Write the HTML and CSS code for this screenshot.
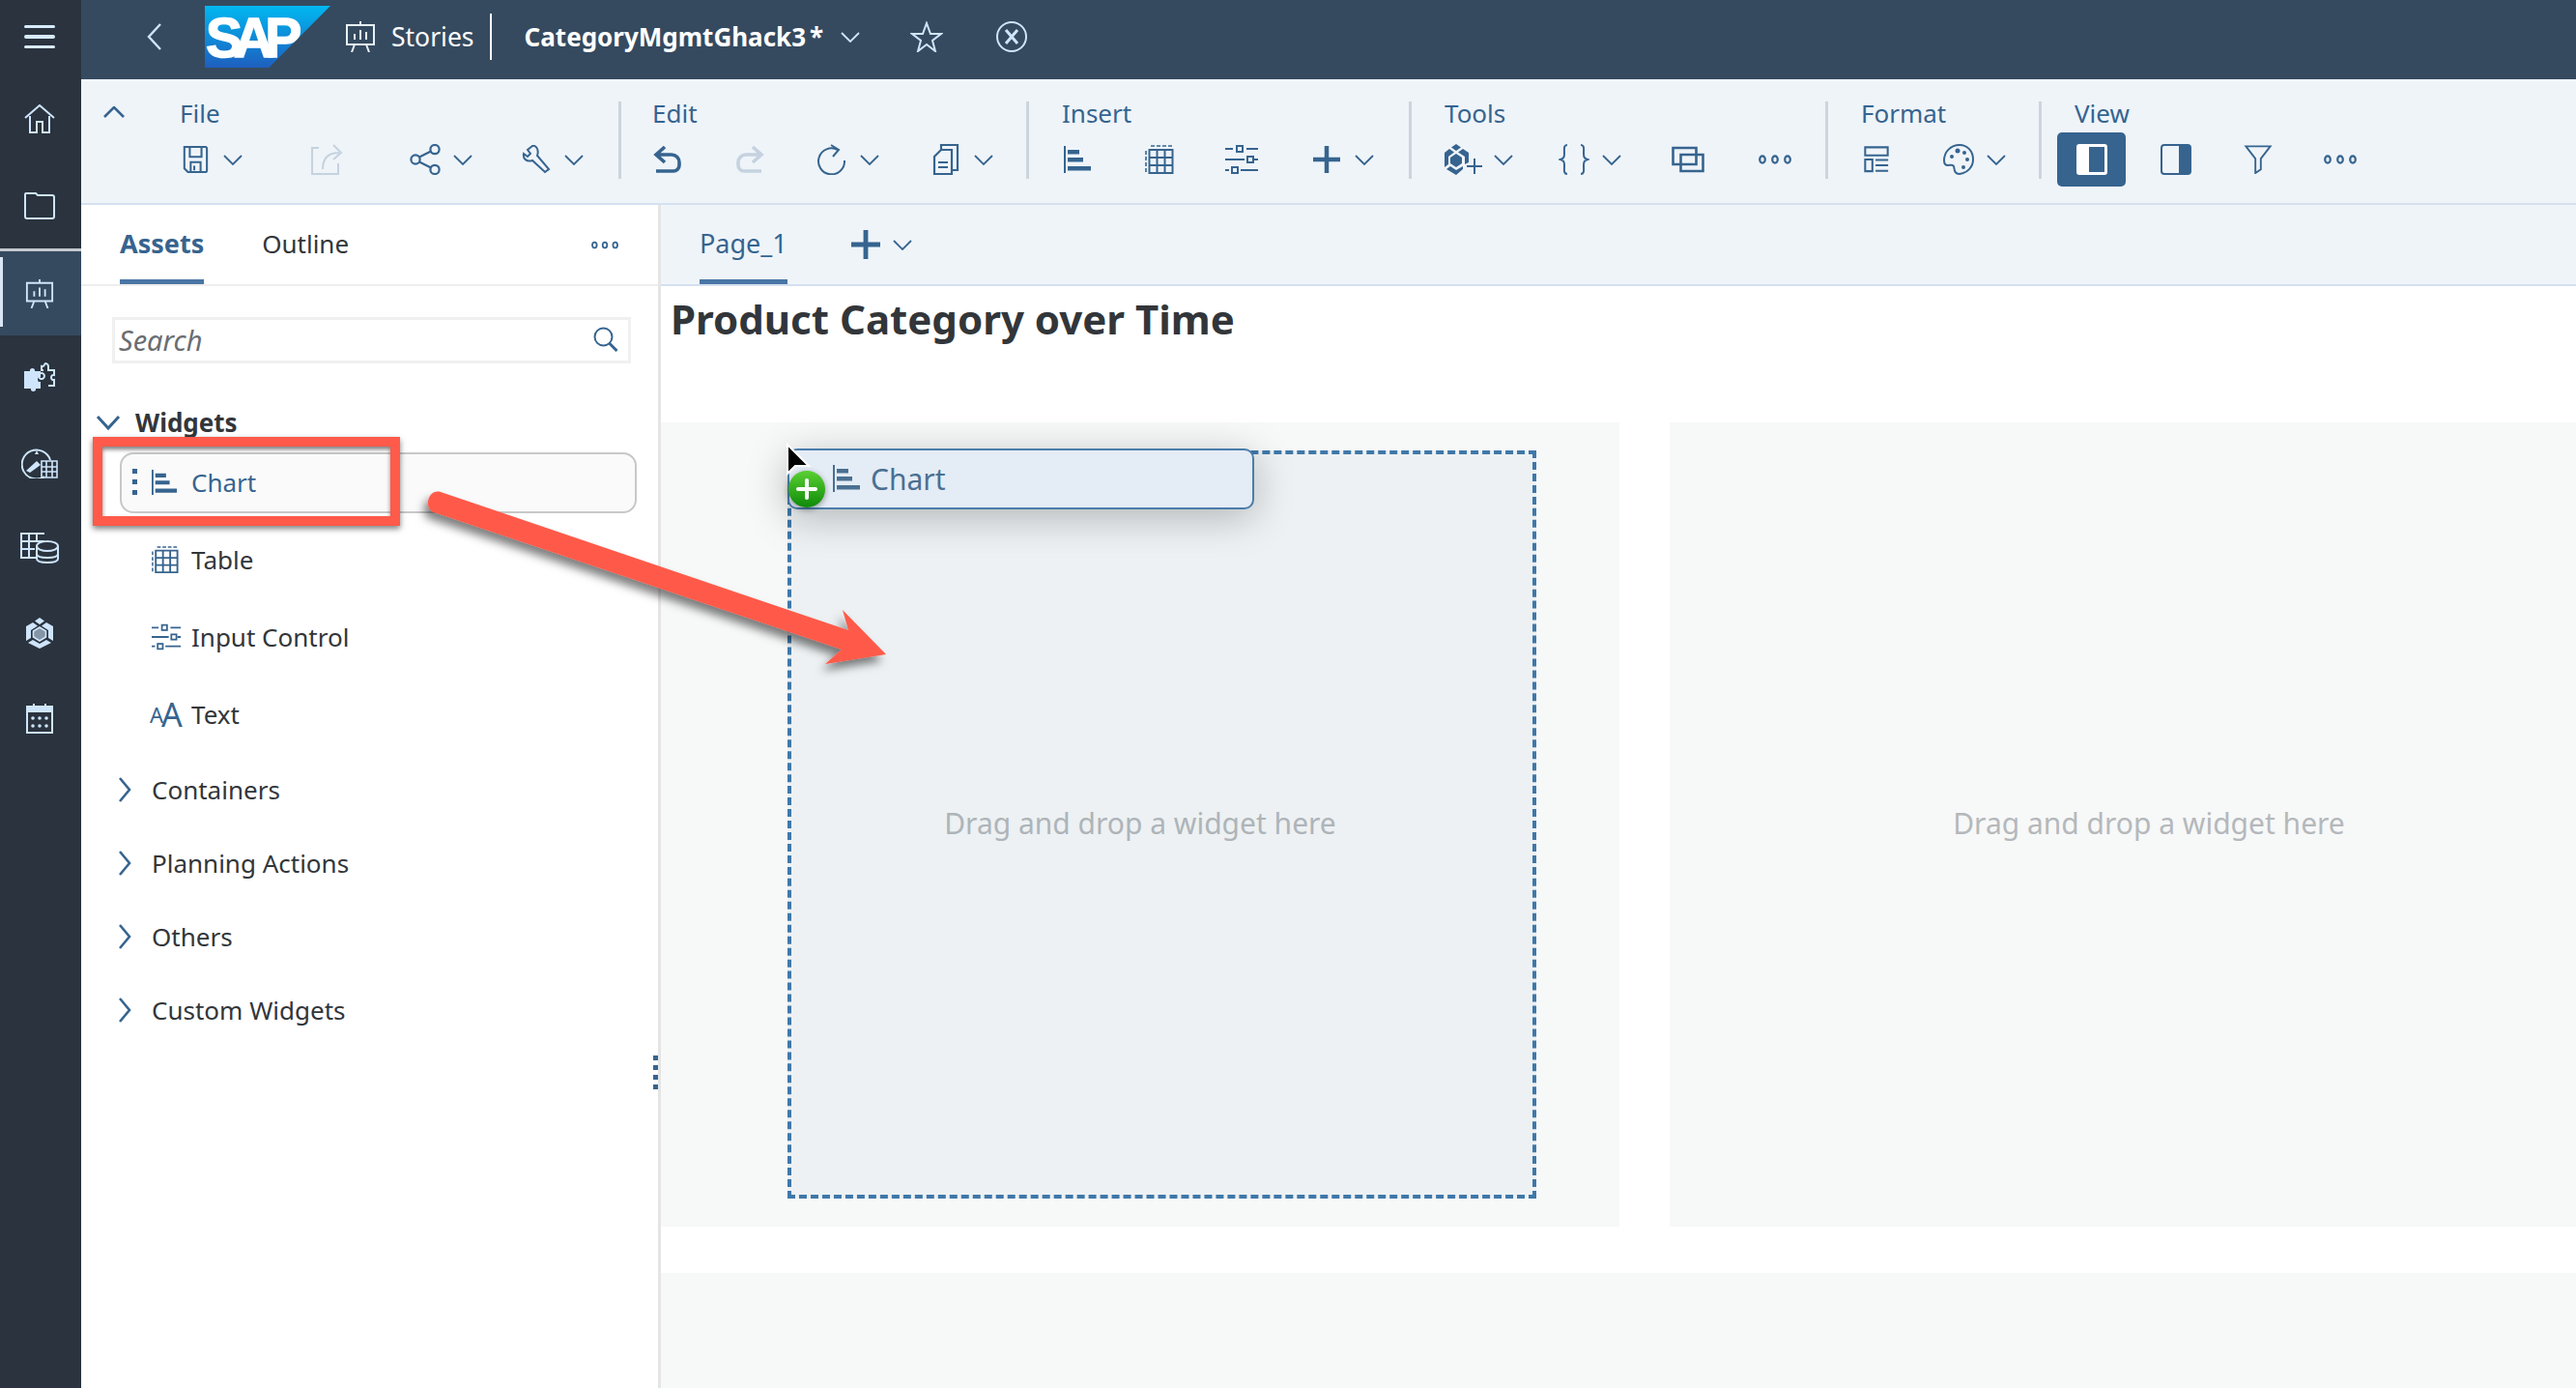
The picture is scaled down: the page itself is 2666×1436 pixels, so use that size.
FILE: index.html
```html
<!DOCTYPE html>
<html lang="en">
  <head>
    <meta charset="utf-8" />
    <meta name="viewport" content="width=device-width, initial-scale=1.0" />
    <title>CategoryMgmtGhack3 - Stories</title>
    <link rel="stylesheet" href="styles.css">
  </head>
  <body>
    <!-- Icon sprite -->
    <svg class="sprite" xmlns="http://www.w3.org/2000/svg">
      <symbol id="i-chev" viewBox="0 0 20 11"><path d="M1 1l9 9 9-9" fill="none" stroke="currentColor" stroke-width="1.8"/></symbol>
      <symbol id="i-save" viewBox="0 0 28 30"><path d="M2 1h23a2 2 0 0 1 2 2v24a2 2 0 0 1-2 2H6l-4-4z M8 1v11h13V1 M9 29V18h11v11 M13 22v5" fill="none" stroke="currentColor" stroke-width="2.2"/></symbol>
      <symbol id="i-export" viewBox="0 0 34 32"><path d="M9 4H2v27h27V20 M13 26c0-11 6-17 17-17 M24 1l8 8-8 7" fill="none" stroke="currentColor" stroke-width="2"/></symbol>
      <symbol id="i-share" viewBox="0 0 32 32"><g fill="none" stroke="currentColor" stroke-width="2.2"><circle cx="6" cy="16" r="4.6"/><circle cx="26" cy="5.6" r="4.6"/><circle cx="26" cy="26.4" r="4.6"/><path d="M10 13.6l12-6M10 18.4l12 6"/></g></symbol>
      <symbol id="i-wrench" viewBox="0 0 30 30"><path d="M11 2L6 6l3 4-3 3-4-3c-1 5 3 9 9 7l13 12 4-3-12-14c2-6-1-11-5-10z" transform="translate(0 -1)" fill="none" stroke="currentColor" stroke-width="2"/></symbol>
      <symbol id="i-undo" viewBox="0 0 30 30"><path d="M12 2L3 10l9 8 M3 10h16a8 8 0 0 1 8 8v3a6 6 0 0 1-6 6H3" fill="none" stroke="currentColor" stroke-width="3.6"/></symbol>
      <symbol id="i-redo" viewBox="0 0 30 30"><path d="M18 2l9 8-9 8 M27 10H11a8 8 0 0 0-8 8v3a6 6 0 0 0 6 6h18" fill="none" stroke="currentColor" stroke-width="3.6"/></symbol>
      <symbol id="i-refresh" viewBox="0 0 30 32"><path d="M21 6A13.5 13.5 0 1 0 28 17 M14 1l8 5-6 7" fill="none" stroke="currentColor" stroke-width="2"/></symbol>
      <symbol id="i-copy" viewBox="0 0 28 32"><path d="M9 6V1h17v26h-6 M9 6h11v25H2V13z M6 19h10 M6 24h10" fill="none" stroke="currentColor" stroke-width="2.2"/></symbol>
      <symbol id="i-chart" viewBox="0 0 28 28"><path d="M1 0v28" stroke="currentColor" stroke-width="2"/><path d="M4 4h12v4.500H4z M4 12h16v4.500H4z M4 21h24v4.500H4z" fill="currentColor"/></symbol>
      <symbol id="i-table" viewBox="0 0 30 30"><path d="M6 1h4M12 1h4M18 1h4M24 1h4M1 6v4M1 12v4M1 18v4M1 24v4" stroke="currentColor" stroke-width="1.600"/><path d="M4.500 5h24v24h-24z M4.500 13h24M4.500 21h24M12.500 5v24M20.500 5v24" fill="none" stroke="currentColor" stroke-width="2"/></symbol>
      <symbol id="i-input" viewBox="0 0 34 30"><g fill="none" stroke="currentColor" stroke-width="2"><path d="M0 4h8M22 4h12M0 15h20M30 15h4M0 26h4M16 26h18"/><rect x="12" y="1" width="6" height="6"/><rect x="23" y="12" width="6" height="6"/><rect x="7" y="23" width="6" height="6"/></g></symbol>
      <symbol id="i-plus" viewBox="0 0 28 28"><path d="M14 0v28M0 14h28" stroke="currentColor" stroke-width="4.500"/></symbol>
      <symbol id="i-cube" viewBox="0 0 30 32"><path d="M15 0l5 3.500-5 3.500-5-3.500z M8 5l5 3.500-7 4.500v8l-5 3V9z M22 5l7 4v15l-5-3v-8l-7-4.500z M3 26l5-3 7 4 7-4 5 3-12 6z" fill="currentColor"/><path d="M15 10l6.500 4v6L15 24l-6.500-4v-6z" fill="currentColor" fill-opacity=".55" stroke="currentColor" stroke-width="1.600"/></symbol>
      <symbol id="i-cube-add" viewBox="0 0 40 32"><path d="M13 0l5 3.500-5 3.500-5-3.500z M6 5l5 3.500-6 4.500v8l-4 3V9z M20 5l6 4v10l-4 2v-8l-7-4.500z M3 26l4-3 6 4 7-4v3l-7 6z" fill="currentColor"/><path d="M13 10l6 4v6l-6 4-6-4v-6z" fill="currentColor"/><path d="M32 15v16M24 23h16" stroke="currentColor" stroke-width="2"/></symbol>
      <symbol id="i-braces" viewBox="0 0 30 32"><path d="M8 1C4 1 5 5 5 10c0 4-1 5-4 6 3 1 4 2 4 6 0 5-1 9 3 9 M22 1c4 0 3 4 3 9 0 4 1 5 4 6-3 1-4 2-4 6 0 5 1 9-3 9" fill="none" stroke="currentColor" stroke-width="2"/></symbol>
      <symbol id="i-clone" viewBox="0 0 34 27"><path d="M1.500 1.500h24v17h-24z M9.500 8.500h23v17h-23z" fill="none" stroke="currentColor" stroke-width="2.600"/></symbol>
      <symbol id="i-dots" viewBox="0 0 34 10"><g fill="none" stroke="currentColor" stroke-width="2.200"><ellipse cx="4" cy="5" rx="2.800" ry="3.600"/><ellipse cx="17" cy="5" rx="2.800" ry="3.600"/><ellipse cx="30" cy="5" rx="2.800" ry="3.600"/></g></symbol>
      <symbol id="i-layout" viewBox="0 0 28 30"><path d="M1.500 1.500h25v9h-25z M1.500 15h8v13h-8z" fill="none" stroke="currentColor" stroke-width="2.200"/><path d="M13 15.500h14M13 21.500h14M13 27.500h14" stroke="currentColor" stroke-width="2.200"/></symbol>
      <symbol id="i-palette" viewBox="0 0 32 32"><path d="M17 1C8 1 1 8 1 17c0 3 1 5 4 5 3 0 5-1 6 1 1 3 0 8 6 8 8-1 14-7 14-15 0-9-6-15-14-15z" fill="none" stroke="currentColor" stroke-width="2"/><g fill="currentColor"><circle cx="9" cy="13" r="2"/><circle cx="15" cy="7" r="2.500"/><circle cx="22" cy="9" r="2"/><circle cx="25" cy="16" r="2"/><circle cx="21" cy="24" r="2"/></g></symbol>
      <symbol id="i-pane-left" viewBox="0 0 32 32"><rect width="32" height="32" rx="3" fill="#fff"/><rect x="13" y="3" width="16" height="26" fill="#36648f"/></symbol>
      <symbol id="i-pane-right" viewBox="0 0 32 32"><rect x="1" y="1" width="30" height="30" rx="3" fill="none" stroke="currentColor" stroke-width="2"/><path d="M19 1h9a3 3 0 0 1 3 3v24a3 3 0 0 1-3 3h-9z" fill="currentColor"/></symbol>
      <symbol id="i-filter" viewBox="0 0 30 32"><path d="M1.500 1.500h27L18 15v12l-6 4V15z" fill="none" stroke="currentColor" stroke-width="2"/></symbol>
      <symbol id="i-search" viewBox="0 0 26 26"><circle cx="10.500" cy="10.500" r="9" fill="none" stroke="currentColor" stroke-width="2"/><path d="M16.500 17l8 8" stroke="currentColor" stroke-width="3"/></symbol>
      <symbol id="i-stories" viewBox="0 0 30 32"><path d="M15 0v4M1 4h28v20H1z M9 24l-3 8M21 24l3 8M9 19v-6M15 19V9M21 19v-8" fill="none" stroke="currentColor" stroke-width="2"/></symbol>
      <symbol id="i-home" viewBox="0 0 32 30"><path d="M1 14L16 1l15 13 M6 12v17h7V18h6v11h7V12" fill="none" stroke="currentColor" stroke-width="2"/></symbol>
      <symbol id="i-folder" viewBox="0 0 32 28"><path d="M1 2a1 1 0 0 1 1-1h10l2 2h15a2 2 0 0 1 2 2v20a2 2 0 0 1-2 2H3a2 2 0 0 1-2-2z" fill="none" stroke="currentColor" stroke-width="2"/></symbol>
      <symbol id="i-puzzle" viewBox="0 0 32 32"><path d="M0 9h6c-1-4 6-4 5 0h6v6c-4-1-4 6 0 5v7h-5c1 4-6 4-5 0H0z" fill="currentColor"/><path d="M20 8h-2V4c3 1 3-3 4-3s3 1 3 3v4h6v5c-4-1-4 6 0 5v6h-6 M21 14a3 3 0 1 0 0 .1" fill="none" stroke="currentColor" stroke-width="2"/></symbol>
      <symbol id="i-gauge" viewBox="0 0 38 32"><path d="M24 30A15 15 0 1 1 30 13" fill="none" stroke="currentColor" stroke-width="2"/><path d="M5 24l11-10 4 4-11 8z M16 3l2 4h-4z" fill="currentColor"/><path d="M21 14h16v17H21z M26 14v17M32 14v17M21 20h16M21 25h16" fill="none" stroke="currentColor" stroke-width="1.600"/></symbol>
      <symbol id="i-data" viewBox="0 0 40 32"><path d="M25 1H1v25h15 M1 9h24M1 17h14M9 1v25M17 1v8" fill="none" stroke="currentColor" stroke-width="2"/><g fill="none" stroke="currentColor" stroke-width="2"><ellipse cx="28" cy="14" rx="11" ry="5"/><path d="M17 14v13c0 3 5 4 11 4s11-1 11-4V14M17 22c0 3 5 4 11 4s11-1 11-4"/></g></symbol>
      <symbol id="i-calendar" viewBox="0 0 28 32"><path d="M1 4h26v27H1z" fill="none" stroke="currentColor" stroke-width="2"/><path d="M1 4h26v6H1z M7 1h2v4H7z M19 1h2v4h-2z" fill="currentColor"/><g fill="currentColor"><circle cx="7" cy="16" r="1.800"/><circle cx="14" cy="16" r="1.800"/><circle cx="21" cy="16" r="1.800"/><circle cx="7" cy="24" r="1.800"/><circle cx="14" cy="24" r="1.800"/><circle cx="21" cy="24" r="1.800"/></g></symbol>
    </svg>

    <div class="app">
      <nav class="rail">
        <a class="rail-item">
          <span class="burger"><i></i><i></i><i></i></span>
        </a>
        <a class="rail-item"><svg class="ic-home"><use href="#i-home"/></svg></a>
        <a class="rail-item"><svg class="ic-folder"><use href="#i-folder"/></svg></a>
        <a class="rail-item active"><svg class="ic-home"><use href="#i-stories"/></svg></a>
        <a class="rail-item"><svg class="ic-puzzle"><use href="#i-puzzle"/></svg></a>
        <a class="rail-item"><svg class="ic-gauge"><use href="#i-gauge"/></svg></a>
        <a class="rail-item"><svg class="ic-data"><use href="#i-data"/></svg></a>
        <a class="rail-item"><svg class="ic-cube"><use href="#i-cube"/></svg></a>
        <a class="rail-item"><svg class="ic-cal"><use href="#i-calendar"/></svg></a>
      </nav>

      <div class="work">
        <header class="topbar">
          <svg class="back" viewBox="0 0 16 28"><path d="M14 1L2 14l12 13" fill="none" stroke="currentColor" stroke-width="2.400"/></svg>
          <div class="sap-logo"><span>SAP</span></div>
          <svg class="top-stories"><use href="#i-stories"/></svg>
          <span class="top-app">Stories</span>
          <span class="top-file">CategoryMgmtGhack3</span><span class="top-star">*</span>
          <svg class="chev top-chev"><use href="#i-chev"/></svg>
          <svg class="top-fav" viewBox="0 0 34 32"><path d="M17 2l4 11h11l-9 7 3 11-9-7-9 7 3-11-9-7h11z" fill="none" stroke="currentColor" stroke-width="2"/></svg>
          <svg class="top-close" viewBox="0 0 32 32"><circle cx="16" cy="16" r="15" fill="none" stroke="currentColor" stroke-width="2"/><path d="M10 9l12 14M22 9L10 23" stroke="currentColor" stroke-width="3"/></svg>
        </header>

        <section class="toolbar">
          <div class="collapse"><svg viewBox="0 0 22 12"><path d="M1 11L11 1l10 10" fill="none" stroke="currentColor" stroke-width="2.600"/></svg></div>
          <div class="group group-file">
            <div class="group-label">File</div>
            <div class="tools">
              <div class="tool w136"><span class="ico"><svg class="s28"><use href="#i-save"/></svg></span><svg class="chev"><use href="#i-chev"/></svg></div>
              <div class="tool w102 off"><span class="ico"><svg class="s34"><use href="#i-export"/></svg></span></div>
              <div class="tool w115"><span class="ico"><svg class="s32"><use href="#i-share"/></svg></span><svg class="chev"><use href="#i-chev"/></svg></div>
              <div class="tool w115"><span class="ico"><svg class="s30"><use href="#i-wrench"/></svg></span><svg class="chev"><use href="#i-chev"/></svg></div>
            </div>
          </div>
          <div class="group group-edit">
            <div class="group-label">Edit</div>
            <div class="tools">
              <div class="tool w85"><span class="ico"><svg class="s30"><use href="#i-undo"/></svg></span></div>
              <div class="tool w85 off"><span class="ico"><svg class="s30"><use href="#i-redo"/></svg></span></div>
              <div class="tool w118"><span class="ico"><svg class="s32"><use href="#i-refresh"/></svg></span><svg class="chev"><use href="#i-chev"/></svg></div>
              <div class="tool"><span class="ico"><svg class="s32"><use href="#i-copy"/></svg></span><svg class="chev"><use href="#i-chev"/></svg></div>
            </div>
          </div>
          <div class="group group-insert">
            <div class="group-label">Insert</div>
            <div class="tools">
              <div class="tool w85"><span class="ico"><svg class="s28"><use href="#i-chart"/></svg></span></div>
              <div class="tool w85"><span class="ico"><svg class="s30"><use href="#i-table"/></svg></span></div>
              <div class="tool w88"><span class="ico"><svg class="s34"><use href="#i-input"/></svg></span></div>
              <div class="tool"><span class="ico"><svg class="s28"><use href="#i-plus"/></svg></span><svg class="chev"><use href="#i-chev"/></svg></div>
            </div>
          </div>
          <div class="group group-tools">
            <div class="group-label">Tools</div>
            <div class="tools">
              <div class="tool w118"><span class="ico"><svg class="s40"><use href="#i-cube-add"/></svg></span><svg class="chev"><use href="#i-chev"/></svg></div>
              <div class="tool w118"><span class="ico"><svg class="s32"><use href="#i-braces"/></svg></span><svg class="chev"><use href="#i-chev"/></svg></div>
              <div class="tool w90"><span class="ico"><svg class="s34"><use href="#i-clone"/></svg></span></div>
              <div class="tool"><span class="ico"><svg class="dots"><use href="#i-dots"/></svg></span></div>
            </div>
          </div>
          <div class="group group-format">
            <div class="group-label">Format</div>
            <div class="tools">
              <div class="tool w85"><span class="ico"><svg class="s28"><use href="#i-layout"/></svg></span></div>
              <div class="tool"><span class="ico"><svg class="s32"><use href="#i-palette"/></svg></span><svg class="chev"><use href="#i-chev"/></svg></div>
            </div>
          </div>
          <div class="group group-view">
            <div class="group-label">View</div>
            <div class="tools view-tools">
              <div class="tool tool-on"><svg class="s32"><use href="#i-pane-left"/></svg></div>
              <div class="tool w85"><span class="ico"><svg class="s32"><use href="#i-pane-right"/></svg></span></div>
              <div class="tool w85"><span class="ico"><svg class="s30"><use href="#i-filter"/></svg></span></div>
              <div class="tool"><span class="ico"><svg class="dots"><use href="#i-dots"/></svg></span></div>
            </div>
          </div>
        </section>

        <div class="body">
          <aside class="panel">
            <div class="panel-tabs">
              <span class="tab tab-on">Assets</span>
              <span class="tab tab-outline">Outline</span>
              <svg class="dots panel-more"><use href="#i-dots"/></svg>
            </div>
            <div class="search">
              <span>Search</span>
              <svg class="search-ic"><use href="#i-search"/></svg>
            </div>
            <div class="tree-head">
              <svg viewBox="0 0 26 17"><path d="M2 2l11 12L24 2" fill="none" stroke="currentColor" stroke-width="3"/></svg>
              <b>Widgets</b>
            </div>
            <div class="widget widget-hover">
              <span class="grip"><i></i><i></i><i></i></span>
              <span class="widget-ic"><svg class="s26"><use href="#i-chart"/></svg></span>
              <span>Chart</span>
            </div>
            <div class="widget">
              <span class="widget-ic"><svg class="s28"><use href="#i-table"/></svg></span>
              <span>Table</span>
            </div>
            <div class="widget">
              <span class="widget-ic"><svg class="s30"><use href="#i-input"/></svg></span>
              <span>Input Control</span>
            </div>
            <div class="widget">
              <span class="widget-ic aa"><small>A</small>A</span>
              <span>Text</span>
            </div>
            <div class="tree-row"><svg viewBox="0 0 14 26"><path d="M2 1l10 12L2 25" fill="none" stroke="currentColor" stroke-width="2.600"/></svg>Containers</div>
            <div class="tree-row"><svg viewBox="0 0 14 26"><path d="M2 1l10 12L2 25" fill="none" stroke="currentColor" stroke-width="2.600"/></svg>Planning Actions</div>
            <div class="tree-row"><svg viewBox="0 0 14 26"><path d="M2 1l10 12L2 25" fill="none" stroke="currentColor" stroke-width="2.600"/></svg>Others</div>
            <div class="tree-row"><svg viewBox="0 0 14 26"><path d="M2 1l10 12L2 25" fill="none" stroke="currentColor" stroke-width="2.600"/></svg>Custom Widgets</div>
            <div class="resize"><i></i><i></i><i></i><i></i></div>
          </aside>

          <main class="canvas">
            <div class="page-tabs">
              <span class="tab tab-on">Page_1</span>
              <svg class="page-add"><use href="#i-plus"/></svg>
              <svg class="chev"><use href="#i-chev"/></svg>
            </div>
            <h1 class="story-title">Product Category over Time</h1>
            <div class="cells">
              <div class="cell">Drag and drop a widget here</div>
              <div class="cell">Drag and drop a widget here</div>
            </div>
            <div class="cell-below"></div>
          </main>
        </div>
      </div>
    </div>

    <!-- Things lying over the page: drop target, drag ghost, annotations -->
    <div class="dropzone"></div>
    <div class="ghost">
      <svg class="s28"><use href="#i-chart"/></svg>
      <span>Chart</span>
    </div>
    <svg class="cursor" viewBox="0 0 30 44"><path d="M2 2v30l8-8h14z" fill="#000" stroke="#fff" stroke-width="2"/></svg>
    <svg class="copy-badge" viewBox="0 0 40 40">
      <defs><linearGradient id="green" x1="0" y1="0" x2="0" y2="1"><stop offset="0" stop-color="#5ad033"/><stop offset="1" stop-color="#0f8a08"/></linearGradient></defs>
      <circle cx="20" cy="20" r="19" fill="url(#green)"/>
      <path d="M20 11v18M11 20h18" stroke="#fff" stroke-width="4" stroke-linecap="round"/>
    </svg>
    <div class="callout"></div>
    <svg class="arrow" viewBox="0 0 2666 1436">
      <defs><filter id="shade" x="-10%" y="-20%" width="120%" height="150%"><feDropShadow dx="-4" dy="7" stdDeviation="5" flood-color="#000" flood-opacity=".5"/></filter></defs>
      <path filter="url(#shade)" d="M456 509L878 652 872 631 917 677 854 687 871 672 449 530C438 526 443 505 456 509z" fill="#ff5a4a"/>
    </svg>
  </body>
</html>
```

FILE: styles.css
```css
html,
body {
  margin: 0;
  height: 100%;
  overflow: hidden;
  font-family: "Noto Sans", sans-serif;
  font-size: 26px;
  color: #32363a;
  background: #fff;
}
.sprite {
  display: none;
}
svg {
  display: block;
  flex: none;
}
.app {
  display: flex;
  height: 1436px;
}

/* Left rail */
.rail {
  flex: 0 0 84px;
  background: #2a333e;
  color: #cfe5fb;
}
.rail-item {
  display: flex;
  align-items: center;
  justify-content: center;
  height: 88px;
  padding-right: 3px;
}
.rail-item:first-child {
  height: 76px;
}
.rail-item:nth-child(2) {
  height: 93px;
}
.rail-item.active {
  position: relative;
  background: #354a5f;
  border-top: 3px solid #c4c9ce;
  height: 87px;
}
.rail-item.active::before {
  content: "";
  position: absolute;
  left: 0;
  top: 6px;
  bottom: 9px;
  width: 3px;
  background: #d8e6f5;
}
.burger {
  display: flex;
  flex-direction: column;
  gap: 7px;
}
.burger i {
  display: block;
  width: 32px;
  height: 3.500px;
  border-radius: 2px;
  background: #d8ebff;
}
.ic-home { width: 32px; height: 30px; }
.ic-folder { width: 32px; height: 28px; }
.ic-puzzle { width: 32px; height: 32px; }
.ic-gauge { width: 38px; height: 32px; }
.ic-data { width: 40px; height: 32px; }
.ic-cube { width: 30px; height: 32px; }
.ic-cal { width: 28px; height: 32px; }

.work {
  flex: 1;
  display: flex;
  flex-direction: column;
  min-width: 0;
}

/* Shell bar */
.topbar {
  display: flex;
  align-items: center;
  flex: 0 0 82px;
  box-sizing: border-box;
  padding-bottom: 6px;
  background: #354a5f;
  color: #fff;
}
.back {
  width: 16px;
  height: 28px;
  margin-left: 68px;
  color: #cfe5fb;
}
.sap-logo {
  width: 130px;
  height: 64px;
  margin-left: 44px;
  background: linear-gradient(#00b8f1, #1e5fbf);
  clip-path: polygon(0 0, 100% 0, 51% 100%, 0 100%);
  overflow: hidden;
}
.sap-logo span {
  display: block;
  font: bold 57px/64px "Liberation Sans", sans-serif;
  letter-spacing: -9px;
  -webkit-text-stroke: 1.500px #fff;
  color: #fff;
  margin: 1px 0 0 1px;
}
.top-stories {
  width: 30px;
  height: 32px;
  margin-left: 16px;
  color: #e8f1fb;
}
.top-app {
  margin-left: 17px;
  padding-right: 16px;
  border-right: 2px solid #fff;
  line-height: 48px;
  font-size: 26.5px;
}
.top-file {
  margin-left: 34px;
  font-weight: 700;
}
.top-star {
  margin-left: 4px;
  font-weight: 700;
}
.chev {
  width: 20px;
  height: 11px;
  margin-left: 12px;
  color: #36648f;
}
.top-chev {
  margin-left: 18px;
  color: #cfe5fb;
}
.top-fav {
  width: 34px;
  height: 32px;
  margin-left: 52px;
  color: #cfe5fb;
}
.top-close {
  width: 32px;
  height: 32px;
  margin-left: 55px;
  color: #cfe5fb;
}

/* Toolbar */
.toolbar {
  display: flex;
  align-items: flex-start;
  flex: 0 0 130px;
  box-sizing: border-box;
  padding-top: 23px;
  background: #eff4f9;
  border-bottom: 2px solid #d5e0ef;
  color: #36648f;
}
.collapse {
  flex: 0 0 101px;
  box-sizing: border-box;
  padding: 5px 0 0 23px;
}
.collapse svg {
  width: 22px;
  height: 12px;
}
.group {
  flex: none;
  height: 80px;
  box-sizing: border-box;
}
.group-file { width: 455px; }
.group-edit { width: 422px; }
.group-insert { width: 396px; }
.group-tools { width: 431px; }
.group-format { width: 221px; }
.group-view { width: 500px; }
.group:not(.group-file) {
  border-left: 3px solid #ccd4dd;
  padding-left: 33px;
}
.group.group-edit {
  padding-left: 31px;
}
.group-label {
  height: 24px;
  line-height: 24px;
  margin: 0 0 8px 1px;
}
.tools {
  display: flex;
  align-items: center;
  height: 56px;
}
.view-tools {
  margin-left: -17px;
}
.tool {
  display: flex;
  flex: none;
  align-items: center;
  height: 56px;
}
.off {
  color: #c5d2df;
}
.w85 { width: 85px; }
.w88 { width: 88px; }
.w90 { width: 90px; }
.w102 { width: 102px; }
.w115 { width: 115px; }
.w118 { width: 118px; }
.w136 { width: 136px; }
.ico {
  display: flex;
  justify-content: center;
  min-width: 34px;
}
.s26 { width: 26px; height: 26px; }
.s28 { width: 28px; height: 28px; }
.s30 { width: 30px; height: 30px; }
.s32 { width: 32px; height: 32px; }
.s34 { width: 34px; height: 32px; }
.s40 { width: 40px; height: 32px; }
.dots {
  width: 34px;
  height: 10px;
}
.tool-on {
  justify-content: center;
  width: 71px;
  margin-right: 35px;
  background: #36648f;
  border-radius: 5px;
}

.body {
  flex: 1;
  display: flex;
  min-height: 0;
}

/* Assets panel */
.panel {
  position: relative;
  flex: 0 0 600px;
  box-sizing: border-box;
  border-right: 3px solid #e5e5e5;
}
.panel-tabs,
.page-tabs {
  display: flex;
  align-items: center;
  height: 84px;
  box-sizing: border-box;
  border-bottom: 2px solid #eeeeee;
}
.panel-tabs {
  padding-left: 40px;
}
.tab {
  align-self: stretch;
  line-height: 80px;
}
.tab-on {
  color: #36648f;
  box-shadow: inset 0 -5px 0 #4a76a5;
}
.panel-tabs .tab-on {
  font-size: 27px;
  font-weight: 700;
}
.tab-outline {
  margin-left: 60px;
}
.panel-more {
  width: 28px;
  height: 9px;
  margin-left: 251px;
  color: #36648f;
}
.search {
  display: flex;
  align-items: center;
  justify-content: space-between;
  box-sizing: border-box;
  width: 537px;
  height: 48px;
  margin: 32px 0 0 32px;
  padding: 0 10px 2px 4px;
  border: 3px solid #f0f0f0;
  font-size: 29px;
  font-style: italic;
  color: #6a6d70;
}
.search-ic {
  width: 26px;
  height: 26px;
  color: #36648f;
}
.tree-head {
  display: flex;
  align-items: center;
  height: 40px;
  margin-top: 41px;
  padding-left: 15px;
}
.tree-head svg {
  width: 26px;
  height: 17px;
  margin-right: 15px;
  color: #36648f;
}
.widget {
  display: flex;
  align-items: center;
  box-sizing: border-box;
  height: 80px;
  padding: 0 0 2px 73px;
}
.widget-ic {
  display: flex;
  align-items: center;
  width: 41px;
  color: #36648f;
}
.widget-hover {
  width: 535px;
  height: 63px;
  margin: 11px 0 9px 40px;
  padding: 0 0 2px 11px;
  border: 2px solid #c8c8c8;
  border-radius: 14px;
  background: #fafafa;
  color: #36648f;
}
.grip {
  display: flex;
  flex-direction: column;
  gap: 6px;
  width: 5px;
  margin-right: 15px;
}
.grip i {
  display: block;
  width: 5px;
  height: 5px;
  background: #36648f;
}
.aa {
  font-size: 34px;
  line-height: 34px;
  letter-spacing: -2px;
  margin-left: -2px;
  margin-right: 2px;
}
.aa small {
  font-size: 22px;
}
.tree-row {
  display: flex;
  align-items: center;
  box-sizing: border-box;
  height: 76px;
  padding: 0 0 2px 38px;
}
.tree-row svg {
  width: 14px;
  height: 26px;
  margin-right: 21px;
  color: #36648f;
}
.resize {
  position: absolute;
  left: 592px;
  top: 880px;
  display: flex;
  flex-direction: column;
  gap: 5px;
}
.resize i {
  display: block;
  width: 5px;
  height: 5px;
  background: #36648f;
}

/* Story canvas */
.canvas {
  flex: 1;
  display: flex;
  flex-direction: column;
  min-width: 0;
  overflow: hidden;
}
.page-tabs {
  background: #eff4f9;
  border-bottom-color: #d5e0ef;
  padding-left: 40px;
  flex: none;
}
.page-tabs .tab {
  font-size: 27px;
}
.page-add {
  width: 30px;
  height: 30px;
  margin-left: 66px;
  color: #36648f;
}
.page-tabs .chev {
  margin-left: 13px;
}
.story-title {
  flex: 0 0 141px;
  margin: 0;
  padding-left: 10px;
  font-size: 42px;
  font-weight: 700;
  line-height: 68px;
  color: #32363a;
}
.cells {
  display: flex;
  gap: 52px;
  flex: 0 0 832px;
}
.cell {
  flex: 0 0 992px;
  display: flex;
  align-items: center;
  justify-content: center;
  box-sizing: border-box;
  padding-bottom: 3px;
  background: #f7f8f8;
  font-size: 30px;
  color: #b5b8bb;
}
.cell-below {
  flex: 1;
  margin-top: 48px;
  background: #f7f8f8;
}

/* Overlays */
.dropzone {
  position: absolute;
  left: 815px;
  top: 466px;
  width: 775px;
  height: 774px;
  box-sizing: border-box;
  border: 4px dashed #3f78a9;
  background: rgba(60, 110, 160, .05);
}
.ghost {
  position: absolute;
  left: 815px;
  top: 464px;
  width: 483px;
  height: 63px;
  box-sizing: border-box;
  display: flex;
  align-items: center;
  padding: 0 0 1px 45px;
  gap: 11px;
  border: 2px solid #4a7dab;
  border-radius: 10px;
  background: #e4ecf5;
  box-shadow: 0 8px 40px rgba(0, 0, 0, .25);
  font-size: 30px;
  color: #4a7092;
}
.cursor {
  position: absolute;
  left: 813px;
  top: 458px;
  width: 30px;
  height: 44px;
}
.copy-badge {
  position: absolute;
  left: 815px;
  top: 486px;
  width: 40px;
  height: 40px;
  filter: drop-shadow(0 2px 3px rgba(0, 0, 0, .4));
}
.callout {
  position: absolute;
  left: 96px;
  top: 452px;
  width: 318px;
  height: 92px;
  box-sizing: border-box;
  border: 10px solid #ff5a4a;
  box-shadow: 0 3px 6px rgba(0, 0, 0, .5), inset 0 3px 4px rgba(0, 0, 0, .5);
}
.arrow {
  position: absolute;
  left: 0;
  top: 0;
  width: 2666px;
  height: 1436px;
  pointer-events: none;
}
```
